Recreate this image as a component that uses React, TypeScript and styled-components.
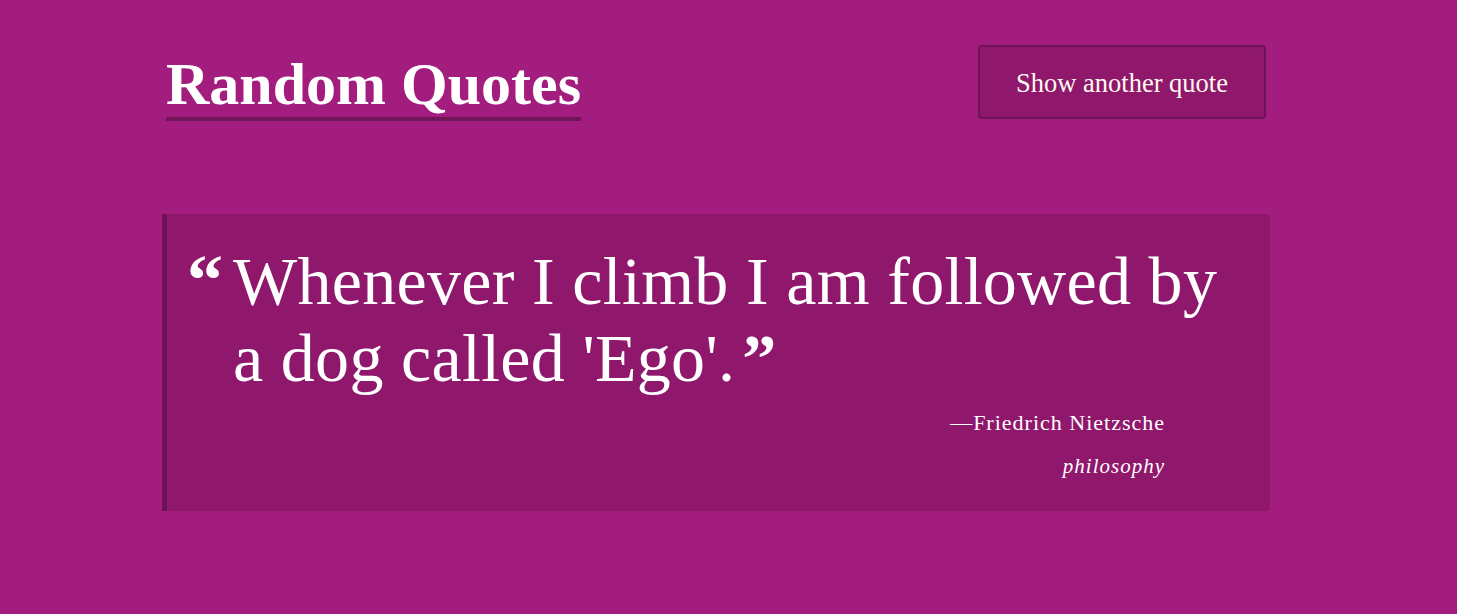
import React from "react";
import styled, { createGlobalStyle } from "styled-components";

const GlobalStyle = createGlobalStyle`
  html, body {
    margin: 0;
    padding: 0;
    background: #a21d7d;
  }
  body {
    font-family: "Liberation Serif", "Times New Roman", serif;
    color: #ffffff;
  }
`;

const Page = styled.div`
  min-height: 614px;
  background: #a21d7d;
  padding: 45px 0 0 162px;
  box-sizing: border-box;
`;

const Container = styled.div`
  width: 1108px;
`;

const Header = styled.header`
  display: flex;
  justify-content: space-between;
  align-items: flex-start;
  padding: 0 4px;
`;

const Title = styled.h1`
  margin: 9px 0 0;
  font-family: "Liberation Serif", serif;
  font-weight: 700;
  font-size: 60px;
  line-height: 60px;
  padding-bottom: 3px;
  border-bottom: 4px solid #6f1558;
  color: #ffffff;
`;

const Button = styled.button`
  width: 288px;
  height: 74px;
  box-sizing: border-box;
  background: #8f186c;
  border: 2px solid #6c1457;
  border-radius: 4px;
  color: #fffaf0;
  font-family: "Liberation Serif", serif;
  font-size: 26.5px;
  cursor: pointer;
  padding: 3px 0 0;
`;

const Card = styled.blockquote`
  margin: 93px 0 0;
  background: #8f186c;
  border-left: 5px solid #6c1457;
  border-radius: 0 4px 4px 0;
  padding: 29px 40px 28px 20px;
`;

const QuoteRow = styled.div`
  display: flex;
  align-items: flex-start;
`;

const Mark = styled.span`
  font-family: "Liberation Serif", serif;
  font-weight: 700;
  font-size: 72px;
  line-height: 77px;
  width: 46px;
  flex: none;
  margin-top: -1px;
`;

const QuoteText = styled.p`
  margin: 0;
  font-size: 68px;
  line-height: 77px;
  font-weight: 400;
  letter-spacing: 0.3px;
`;

const CloseMark = styled.span`
  font-weight: 700;
  font-size: 68px;
  margin-left: 7px;
`;

const Footer = styled.footer`
  margin: 9px 65px 0 0;
  text-align: right;
`;

const Author = styled.div`
  font-size: 22px;
  line-height: 33px;
  letter-spacing: 1px;
`;

const Tag = styled.div`
  margin-top: 11px;
  font-size: 21px;
  line-height: 33px;
  font-style: italic;
  letter-spacing: 1px;
`;

export default function App() {
  return (
    <>
      <GlobalStyle />
      <Page>
        <Container>
          <Header>
            <Title>Random Quotes</Title>
            <Button type="button">Show another quote</Button>
          </Header>
          <Card>
            <QuoteRow>
              <Mark>“</Mark>
              <QuoteText>
                Whenever I climb I am followed by a dog called 'Ego'.
                <CloseMark>”</CloseMark>
              </QuoteText>
            </QuoteRow>
            <Footer>
              <Author>—Friedrich Nietzsche</Author>
              <Tag>philosophy</Tag>
            </Footer>
          </Card>
        </Container>
      </Page>
    </>
  );
}
